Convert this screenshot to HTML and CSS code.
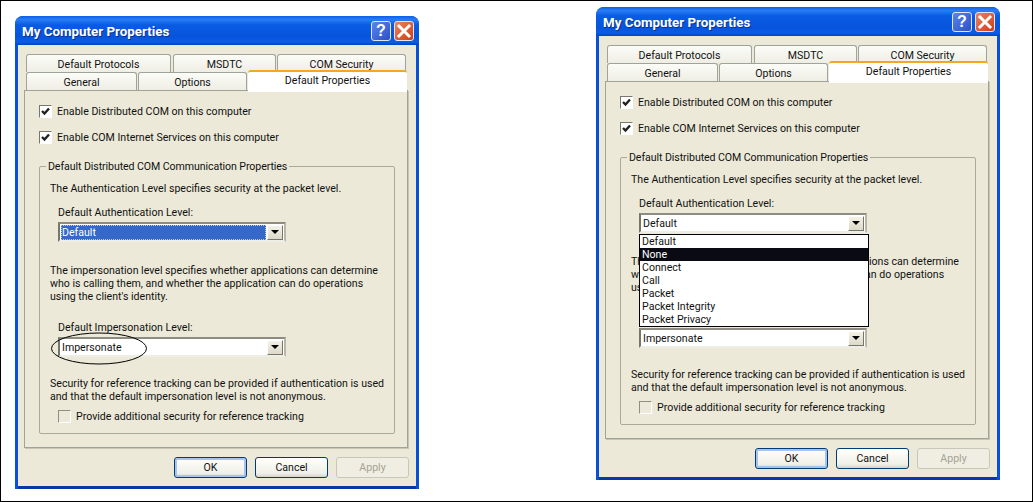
FILE: index.html
```html
<!DOCTYPE html>
<html lang="en">
<head>
<meta charset="utf-8">
<title>My Computer Properties</title>
<link rel="stylesheet" href="styles.css">
</head>
<body>
<div class="page">

<section class="window window-left">
  <header class="titlebar">
    <span class="title">My Computer Properties</span>
    <span class="capbtn help">?</span>
    <span class="capbtn close"><svg viewBox="0 0 20 20" width="20" height="20"><path d="M5 5 15 15M15 5 5 15" stroke="#fff" stroke-width="3" stroke-linecap="square"/></svg></span>
  </header>
  <div class="client">
    <div class="tabrow tabrow-back">
      <span class="tab t-proto">Default Protocols</span>
      <span class="tab t-msdtc">MSDTC</span>
      <span class="tab t-sec">COM Security</span>
    </div>
    <div class="tabrow tabrow-front">
      <span class="tab t-gen">General</span>
      <span class="tab t-opt">Options</span>
      <span class="tab t-active">Default Properties</span>
    </div>
    <div class="panel">
      <label class="check"><span class="box"><svg viewBox="0 0 11 11" width="11" height="11"><path d="M2 5 4.5 7.5 9 2.5" fill="none" stroke="#222" stroke-width="2.4"/></svg></span>Enable Distributed COM on this computer</label>
      <label class="check check-2"><span class="box"><svg viewBox="0 0 11 11" width="11" height="11"><path d="M2 5 4.5 7.5 9 2.5" fill="none" stroke="#222" stroke-width="2.4"/></svg></span>Enable COM Internet Services on this computer</label>
      <fieldset class="group">
        <legend>Default Distributed COM Communication Properties</legend>
        <p class="lead">The Authentication Level specifies security at the packet level.</p>
        <div class="fieldlabel">Default Authentication Level:</div>
        <div class="select"><span class="value selected">Default</span><span class="arrow"></span></div>
        <p class="para">The impersonation level specifies whether applications can determine<br>who is calling them, and whether the application can do operations<br>using the client's identity.</p>
        <div class="fieldlabel fieldlabel-2">Default Impersonation Level:</div>
        <div class="select"><span class="value">Impersonate</span><span class="arrow"></span></div>
        <p class="para para-2">Security for reference tracking can be provided if authentication is used<br>and that the default impersonation level is not anonymous.</p>
        <label class="check check-3"><span class="box box-empty"></span>Provide additional security for reference tracking</label>
      </fieldset>
    </div>
    <div class="buttons">
      <span class="btn btn-default">OK</span>
      <span class="btn">Cancel</span>
      <span class="btn btn-disabled">Apply</span>
    </div>
  </div>
  <svg class="ellipse" viewBox="0 0 98 33" width="98" height="33"><ellipse cx="49" cy="16.5" rx="47.5" ry="15.5" fill="none" stroke="#000" stroke-width="1"/></svg>
</section>

<section class="window window-right">
  <header class="titlebar">
    <span class="title">My Computer Properties</span>
    <span class="capbtn help">?</span>
    <span class="capbtn close"><svg viewBox="0 0 20 20" width="20" height="20"><path d="M5 5 15 15M15 5 5 15" stroke="#fff" stroke-width="3" stroke-linecap="square"/></svg></span>
  </header>
  <div class="client">
    <div class="tabrow tabrow-back">
      <span class="tab t-proto">Default Protocols</span>
      <span class="tab t-msdtc">MSDTC</span>
      <span class="tab t-sec">COM Security</span>
    </div>
    <div class="tabrow tabrow-front">
      <span class="tab t-gen">General</span>
      <span class="tab t-opt">Options</span>
      <span class="tab t-active">Default Properties</span>
    </div>
    <div class="panel">
      <label class="check"><span class="box"><svg viewBox="0 0 11 11" width="11" height="11"><path d="M2 5 4.5 7.5 9 2.5" fill="none" stroke="#222" stroke-width="2.4"/></svg></span>Enable Distributed COM on this computer</label>
      <label class="check check-2"><span class="box"><svg viewBox="0 0 11 11" width="11" height="11"><path d="M2 5 4.5 7.5 9 2.5" fill="none" stroke="#222" stroke-width="2.4"/></svg></span>Enable COM Internet Services on this computer</label>
      <fieldset class="group">
        <legend>Default Distributed COM Communication Properties</legend>
        <p class="lead">The Authentication Level specifies security at the packet level.</p>
        <div class="fieldlabel">Default Authentication Level:</div>
        <div class="select"><span class="value">Default</span><span class="arrow"></span></div>
        <p class="para">The impersonation level specifies whether applications can determine<br>who is calling them, and whether the application can do operations<br>using the client's identity.</p>
        <div class="fieldlabel fieldlabel-2">Default Impersonation Level:</div>
        <div class="select"><span class="value">Impersonate</span><span class="arrow"></span></div>
        <p class="para para-2">Security for reference tracking can be provided if authentication is used<br>and that the default impersonation level is not anonymous.</p>
        <label class="check check-3"><span class="box box-empty"></span>Provide additional security for reference tracking</label>
      </fieldset>
    </div>
    <div class="buttons">
      <span class="btn btn-default">OK</span>
      <span class="btn">Cancel</span>
      <span class="btn btn-disabled">Apply</span>
    </div>
  </div>
  <ul class="droplist">
    <li>Default</li>
    <li class="hot">None</li>
    <li>Connect</li>
    <li>Call</li>
    <li>Packet</li>
    <li>Packet Integrity</li>
    <li>Packet Privacy</li>
  </ul>
</section>

</div>
</body>
</html>
```
FILE: styles.css
```css
* { box-sizing: border-box; }
html, body { margin: 0; padding: 0; background: #fff; }
body { font: 10.6px/13px Roboto, "Liberation Sans", Arial, sans-serif; color: #111; white-space: nowrap; }

.page {
  width: 1033px;
  height: 502px;
  border: 1px solid #000;
  padding-left: 14px;
  display: flex;
  align-items: flex-start;
  gap: 177px;
  overflow: hidden;
}

.window {
  position: relative;
  width: 404px;
  height: 473px;
  display: flex;
  flex-direction: column;
  background: #0a4fd8;
  border-radius: 8px 8px 0 0;
}
.window-left { margin-top: 15px; }
.window-right { margin-top: 6px; }

.titlebar {
  height: 29px;
  flex: none;
  display: flex;
  align-items: center;
  padding: 0 5px 0 7px;
  border-radius: 8px 8px 0 0;
  background: linear-gradient(180deg, #0a5fe8 0%, #2a7cf4 12%, #0a5ce4 30%, #0754dc 70%, #0a5ce8 90%, #0443c0 100%);
}
.title {
  flex: 1;
  padding-top: 2px;
  font: bold 13.35px/16px Roboto, "Liberation Sans", sans-serif;
  color: #fff;
  text-shadow: 1px 1px 0 #0a2f90;
}
.capbtn {
  width: 20px;
  height: 20px;
  border: 1px solid #dfe6f8;
  border-radius: 3px;
  display: flex;
  align-items: center;
  justify-content: center;
}
.help {
  margin-right: 3px;
  background: linear-gradient(135deg, #5a86ea, #2c50c8);
  color: #fff;
  font: bold 16px/18px "Liberation Sans", sans-serif;
}
.close {
  background: linear-gradient(135deg, #e8865e, #cf3c14);
}
.close svg { margin: -1px; flex: none; }

.client {
  flex: 1;
  margin: 0 3px 3px;
  background: #ece9d8;
  padding: 9px 8px 0 6px;
  display: flex;
  flex-direction: column;
  box-shadow: 0 3px 0 #0a36a8;
}

.tabrow { display: flex; height: 18px; flex: none; }
.tabrow-back { padding-left: 2px; }
.tabrow-front { padding-left: 2px; position: relative; z-index: 1; }

.tab {
  display: flex;
  align-items: center;
  justify-content: center;
  height: 18px;
  background: linear-gradient(180deg, #fcfcf8, #eeeee4);
  border: 1px solid #9fa49a;
  border-bottom: 0;
  border-radius: 3px 3px 0 0;
  padding-top: 1px;
}
.t-proto { width: 145px; margin-right: 2px; }
.t-msdtc { width: 103px; margin-right: 1px; }
.t-sec { width: 129px; }
.t-gen { width: 111px; margin-right: 1px; }
.t-opt { width: 109px; margin-right: 1px; }
.t-active {
  width: 159px;
  height: 22px;
  margin-top: -2px;
  padding: 0 0 4px;
  background: #fff;
  border: 0;
  border-top: 2px solid #f3a81f;
  border-radius: 3px 3px 0 0;
  position: relative;
  z-index: 2;
}

.panel {
  flex: none;
  height: 358px;
  border: 1px solid #a0a496;
  padding: 14px 14px 0;
  background: #ece9d8;
  box-shadow: 1px 1px 0 #c8c5b5;
}

.check { display: flex; align-items: center; gap: 5px; height: 13px; }
.check-2 { margin-top: 13px; }
.check-3 { margin: 7px 0 0 8px; }
.box {
  flex: none;
  width: 13px;
  height: 13px;
  background: #fff;
  border: 1px solid;
  border-color: #77776c #fff #fff #77776c;
  display: flex;
  overflow: hidden;
}
.box-empty { background: #ece9d8; border-color: #8f8e82 #fff #fff #8f8e82; }

.group {
  margin: 16px 0 0;
  width: 356px;
  height: 274px;
  padding: 0 10px;
  border: 1px solid #aaa99c;
  border-radius: 2px;
  min-width: 0;
}
.group legend {
  margin-left: -4px;
  padding: 0 2px;
  line-height: 13px;
  letter-spacing: -0.08px;
}
.lead { margin: 9px 0 0; }
.fieldlabel { margin: 11px 0 0 8px; }
.fieldlabel-2 { margin-top: 18px; }

.select {
  margin: 3px 0 0 8px;
  width: 228px;
  height: 20px;
  display: flex;
  align-items: stretch;
  background: #fff;
  border: 2px solid;
  border-color: #8e8c80 #b9b7aa #eeeee8 #77766a;
  padding: 1px 1px 0 1px;
}
.value {
  flex: 1;
  padding-left: 1px;
  display: flex;
  align-items: center;
}
.selected { background: #3568c8; color: #fff; outline: 1px dotted #bcd; outline-offset: -1px; }
.arrow {
  flex: none;
  width: 16px;
  margin-left: 1px;
  background: linear-gradient(180deg, #f4f2e8, #dcd9c8);
  border: 1px solid;
  border-color: #fff #77766a #77766a #fff;
  position: relative;
}
.arrow::after {
  content: "";
  position: absolute;
  left: 3px;
  top: 4px;
  border: 4px solid transparent;
  border-top: 4px solid #000;
  border-bottom: 0;
}

.para { margin: 22px 0 0; }
.para-2 { margin-top: 20px; }

.buttons {
  display: flex;
  justify-content: flex-end;
  gap: 8px;
  margin: 9px -1px 0 0;
}
.btn {
  width: 73px;
  height: 21px;
  display: flex;
  align-items: center;
  justify-content: center;
  border: 1px solid #003c74;
  border-radius: 3px;
  background: linear-gradient(180deg, #fff, #f0f0e6 80%, #d8d4c4);
}
.btn-default { box-shadow: inset 0 0 0 2px #a6c4ee; }
.btn-disabled { border-color: #c9c7ba; color: #a5a294; background: #f0eee2; }

.ellipse { position: absolute; left: 35px; top: 316px; }

.droplist {
  position: absolute;
  left: 43px;
  top: 227px;
  width: 230px;
  height: 93px;
  margin: 0;
  padding: 0;
  list-style: none;
  background: #fff;
  border: 1px solid #000;
  z-index: 5;
}
.droplist li { height: 13px; padding-left: 2px; line-height: 13px; }
.droplist .hot { background: #0a0a14; color: #fff; }
```
